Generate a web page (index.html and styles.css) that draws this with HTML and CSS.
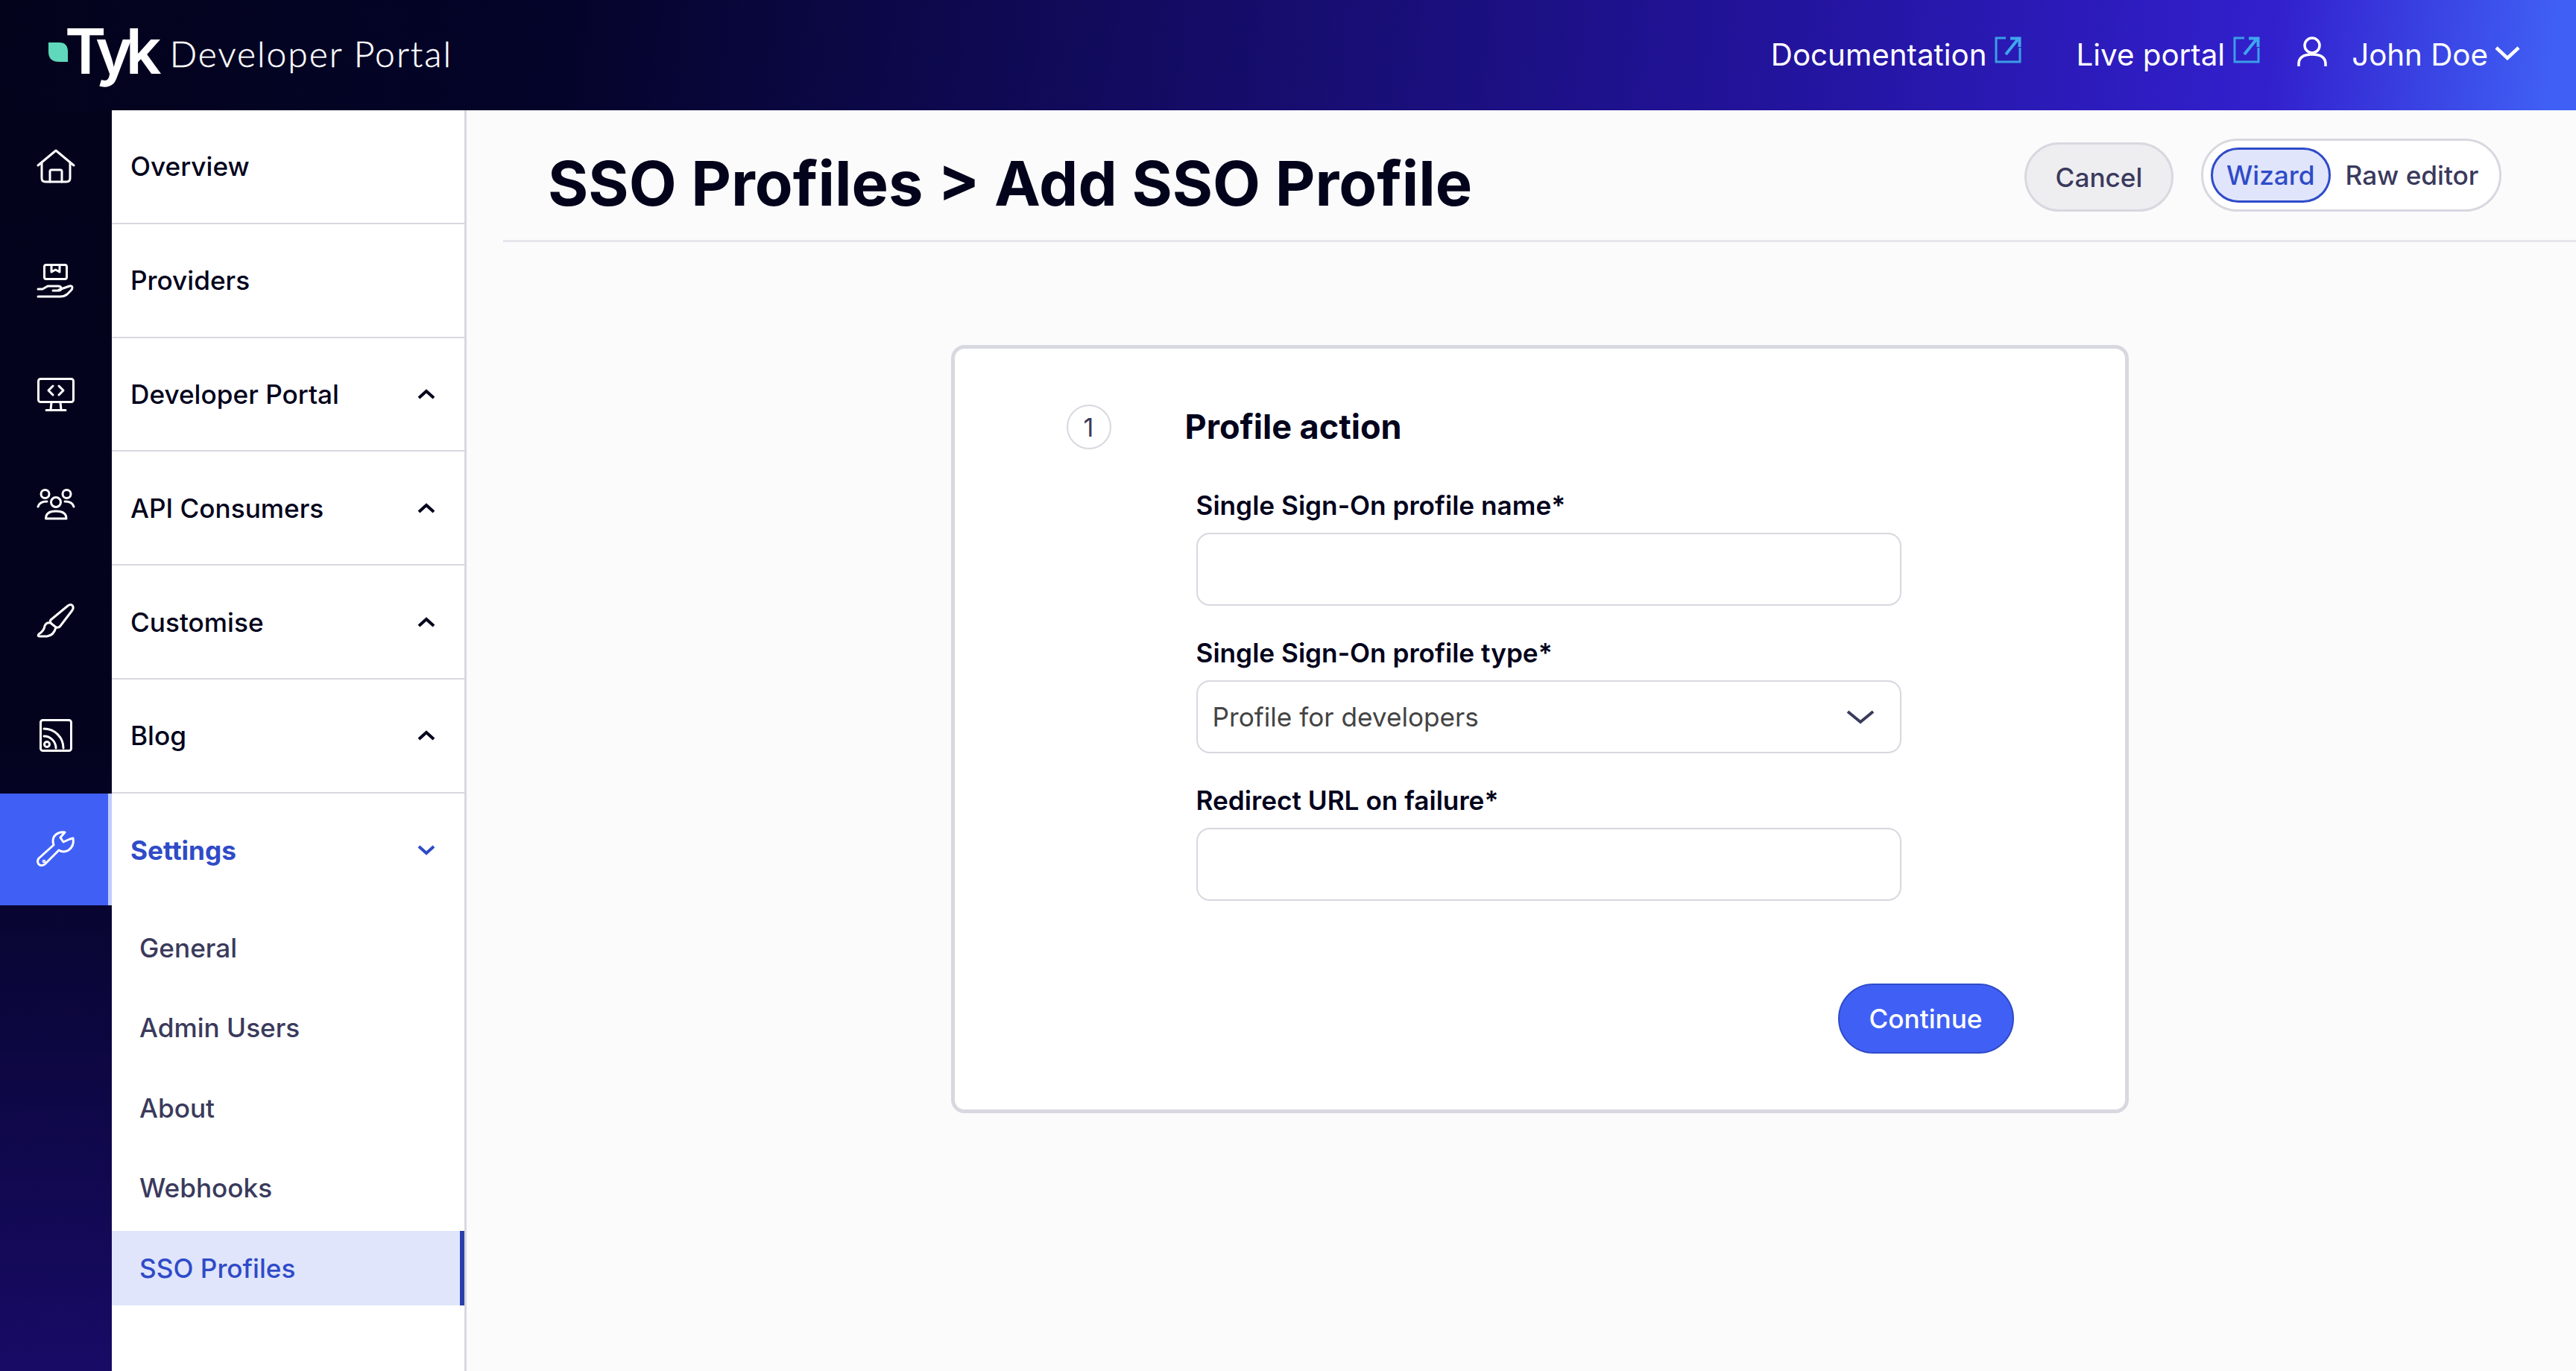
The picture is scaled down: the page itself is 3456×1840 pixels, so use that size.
FILE: index.html
```html
<!DOCTYPE html>
<html lang="en">
<head>
<meta charset="utf-8">
<title>SSO Profiles - Tyk Developer Portal</title>
<link rel="stylesheet" href="styles.css">
</head>
<body>
<header class="topbar">
  <a class="brand">
    <svg class="leaf" viewBox="0 0 28 28"><path d="M0 0H15Q27 0 27 13V27H15Q0 27 0 13Z"/></svg>
    <span class="brand-tyk">Tyk</span>
    <span class="brand-name">Developer Portal</span>
  </a>
  <nav class="topnav">
    <a class="toplink">Documentation
      <svg class="ext" viewBox="0 0 36 36"><path class="ext-box" d="M15 2H2V34H34V15"/><path class="ext-arrow" d="M15 24L31 4M21 2.500H33.500V14"/></svg>
    </a>
    <a class="toplink">Live portal
      <svg class="ext" viewBox="0 0 36 36"><path class="ext-box" d="M15 2H2V34H34V15"/><path class="ext-arrow" d="M15 24L31 4M21 2.500H33.500V14"/></svg>
    </a>
    <a class="toplink user">
      <svg class="user-icon" viewBox="0 0 40 40"><circle cx="20" cy="12" r="10"/><path d="M2 40V37Q2 24 20 24Q38 24 38 37V40"/></svg>
      <span class="user-name">John Doe</span>
      <svg class="user-chev" viewBox="0 0 36 20"><path d="M3 3L18 17L33 3"/></svg>
    </a>
  </nav>
</header>

<div class="shell">
  <aside class="rail">
    <a class="rail-item">
      <svg class="ri" viewBox="0 0 80 70"><path d="M16 34L40 14L64 34"/><path d="M21 31V51Q21 56 26 56H54Q59 56 59 51V31"/><path d="M32 56V42Q32 40 34 40H46Q48 40 48 42V56"/></svg>
    </a>
    <a class="rail-item">
      <svg class="ri" viewBox="0 0 80 70"><rect x="24.500" y="14.500" width="30" height="19" rx="2.500"/><path d="M34 15V24L39.500 21L45 24V15"/><path d="M16 47H22L29 43H43Q47 43 47 46Q47 49 43 49H36"/><path d="M44 48L58 43Q62 42 62 45Q62 47 60 49L55 54Q51 57 46 57H16"/></svg>
    </a>
    <a class="rail-item">
      <svg class="ri" viewBox="0 0 80 70"><rect x="16.500" y="14.500" width="47" height="31" rx="3"/><path d="M36 24L30 30L36 36"/><path d="M44 24L50 30L44 36"/><path d="M34 46L33 56M46 46L47 56M27 56.500H53"/></svg>
    </a>
    <a class="rail-item">
      <svg class="ri" viewBox="0 0 80 70"><circle cx="40" cy="28" r="6.500"/><path d="M26.500 50Q26.500 40 40 40Q54 40 54 50Z"/><circle cx="25.500" cy="17" r="5.500"/><circle cx="54.500" cy="17" r="5.500"/><path d="M16 34Q18 27 28 27M64 34Q62 27 52 27"/></svg>
    </a>
    <a class="rail-item">
      <svg class="ri" viewBox="0 0 80 70"><path d="M33 33L56 14Q60 11 62.500 14Q64 17 62 20L46 41Q43 45 39 42L34 38Q31 35 33 33Z"/><path d="M33 37Q27 36 25 41Q24 48 17 52Q15 55 18 55H28Q37 54 40 43"/></svg>
    </a>
    <a class="rail-item">
      <svg class="ri" viewBox="0 0 80 70"><rect x="19.500" y="14.500" width="41" height="41" rx="3"/><circle cx="28" cy="47" r="3.500"/><path d="M24 36A16 16 0 0 1 40 52M24 26A26 26 0 0 1 50 52"/></svg>
    </a>
    <a class="rail-item active">
      <svg class="ri" viewBox="0 0 80 70"><path d="M17 47L37 29Q34 20 40 15Q45 11 52 12L46 19L50 25L59 21L63 20Q65 30 57 36Q50 40 44 36L25 55Q20 58 17 55Q14 51 17 47Z"/><circle cx="24" cy="51" r="0.800"/></svg>
    </a>
  </aside>

  <nav class="sidebar">
    <a class="side-item">Overview</a>
    <a class="side-item">Providers</a>
    <a class="side-item">Developer Portal<svg class="chev" viewBox="0 0 24 14"><path d="M2 12L12 3L22 12"/></svg></a>
    <a class="side-item">API Consumers<svg class="chev" viewBox="0 0 24 14"><path d="M2 12L12 3L22 12"/></svg></a>
    <a class="side-item">Customise<svg class="chev" viewBox="0 0 24 14"><path d="M2 12L12 3L22 12"/></svg></a>
    <a class="side-item">Blog<svg class="chev" viewBox="0 0 24 14"><path d="M2 12L12 3L22 12"/></svg></a>
    <a class="side-item open">Settings<svg class="chev" viewBox="0 0 24 14"><path d="M2 2L12 11L22 2"/></svg></a>
    <div class="sub-list">
      <a class="sub-item">General</a>
      <a class="sub-item">Admin Users</a>
      <a class="sub-item">About</a>
      <a class="sub-item">Webhooks</a>
      <a class="sub-item current">SSO Profiles</a>
    </div>
  </nav>

  <main class="main">
    <div class="page-head">
      <h1 class="page-title">SSO Profiles &gt; Add SSO Profile</h1>
      <div class="page-actions">
        <button class="btn-cancel" type="button">Cancel</button>
        <div class="mode-toggle">
          <span class="mode on">Wizard</span>
          <span class="mode">Raw editor</span>
        </div>
      </div>
    </div>
    <section class="card">
      <div class="step-head">
        <span class="step-num">1</span>
        <h2 class="step-title">Profile action</h2>
      </div>
      <form class="form">
        <label class="field-label">Single Sign-On profile name*</label>
        <input class="field" type="text">
        <label class="field-label">Single Sign-On profile type*</label>
        <div class="field select">
          <span>Profile for developers</span>
          <svg class="select-chev" viewBox="0 0 40 22"><path d="M3 4L20 18L37 4"/></svg>
        </div>
        <label class="field-label">Redirect URL on failure*</label>
        <input class="field" type="text">
        <div class="form-actions">
          <button class="btn-primary" type="button">Continue</button>
        </div>
      </form>
    </section>
  </main>
</div>
</body>
</html>
```
FILE: styles.css
```css
* { box-sizing: border-box; }
html, body { margin: 0; padding: 0; height: 100%; }
body {
  width: 3456px;
  height: 1840px;
  overflow: hidden;
  display: flex;
  flex-direction: column;
  background: #fbfbfc;
  color: #03031c;
  font-family: Inter, "Liberation Sans", sans-serif;
  font-size: 35.200px;
}

/* top bar */
.topbar {
  height: 148px;
  flex: none;
  display: flex;
  align-items: center;
  justify-content: space-between;
  padding: 0 74px 0 65px;
  background: linear-gradient(97deg, #03031c 0%, #04042a 22%, #22139a 68%, #3220cd 88%, #4060f5 99%);
  color: #fff;
}
.brand { display: flex; align-items: center; }
.leaf { width: 27px; height: 27px; fill: #5fd8bb; align-self: flex-start; margin-top: 52px; flex: none; }
.brand-tyk {
  font-family: Inter, sans-serif;
  font-weight: 600;
  font-size: 84px;
  line-height: 148px;
  letter-spacing: -9px;
  margin-left: -5px;
  margin-top: -10px;
}
.brand-name {
  font-family: Lato, sans-serif;
  font-weight: 300;
  font-size: 48px;
  letter-spacing: 2px;
  -webkit-text-stroke: 0.400px #fff;
  margin-left: 20px;
  margin-top: -6px;
}
.topnav { display: flex; align-items: center; }
.toplink { display: flex; align-items: center; font-size: 40.300px; line-height: 48px; margin-left: 73px; }
.ext { width: 36px; height: 36px; margin: -14px 0 0 11px; fill: none; }
.ext-box { stroke: #3a9fe6; stroke-width: 3; }
.ext-arrow { stroke: #3fa6ee; stroke-width: 4; }
.user { margin-left: 50px; }
.user-icon { width: 40px; height: 40px; margin-top: -10px; fill: none; stroke: #fff; stroke-width: 3.500; }
.user-name { margin-left: 33px; }
.user-chev { width: 36px; height: 20px; margin: -6px 0 0 8px; fill: none; stroke: #fff; stroke-width: 4.500; }

/* layout */
.shell { flex: 1; display: flex; min-height: 0; }

/* icon rail */
.rail {
  width: 150px;
  flex: none;
  display: flex;
  flex-direction: column;
  gap: 2.800px;
  background: linear-gradient(180deg, #03031c 0%, #03031e 50%, #170b66 100%);
}
.rail-item { height: 150px; display: flex; align-items: center; justify-content: center; flex: none; }
.rail-item.active { background: #4060f5; border-right: 5px solid #bfcbfa; padding-left: 5px; }
.ri { width: 80px; height: 70px; fill: none; stroke: #fff; stroke-width: 3; stroke-linecap: round; stroke-linejoin: round; }

/* sidebar */
.sidebar { width: 476px; flex: none; background: #fff; border-right: 3px solid #d8d8e0; }
.side-item {
  height: 152.800px;
  padding: 0 39px 0 25px;
  display: flex;
  align-items: center;
  justify-content: space-between;
  border-bottom: 2.800px solid #d8d8e0;
  font-weight: 500;
  color: #03031c;
}
.side-item.open { font-weight: 700; color: #2f4bc8; border-bottom: 0; }
.chev { width: 24px; height: 14px; fill: none; stroke: #03031c; stroke-width: 4; }
.open .chev { stroke: #2f4bc8; }
.sub-list { display: flex; flex-direction: column; gap: 7.500px; padding-top: 4px; }
.sub-item { height: 100px; padding-left: 37px; display: flex; align-items: center; font-weight: 500; color: #3a3a5c; }
.sub-item.current { background: #e0e5fb; color: #2f4bc8; border-right: 6px solid #2a3fa8; }

/* main */
.main { flex: 1; min-width: 0; margin-left: 49px; display: flex; flex-direction: column; }
.page-head {
  height: 177px;
  flex: none;
  display: flex;
  align-items: center;
  justify-content: space-between;
  padding: 0 100px 0 60px;
  border-bottom: 3px solid #e6e6ec;
}
.page-title { margin: 22px 0 0; font-size: 83px; line-height: 100px; font-weight: 700; color: #03031c; }
.page-actions { display: flex; align-items: center; gap: 37px; }
.btn-cancel {
  width: 200px;
  height: 93px;
  margin-top: 5px;
  border: 3px solid #d8d8e0;
  border-radius: 47px;
  background: #eeeef1;
  color: #3a3a5c;
  font: 500 35.200px Inter, sans-serif;
}
.mode-toggle {
  width: 403px;
  height: 98px;
  padding: 0 10px;
  display: flex;
  align-items: center;
  border: 3px solid #d8d8e0;
  border-radius: 49px;
  background: #fff;
}
.mode { font-weight: 500; color: #3a3a5c; padding: 0 20px; white-space: nowrap; }
.mode.on {
  height: 74px;
  padding: 0 18px;
  display: flex;
  align-items: center;
  border: 3px solid #2f4bc8;
  border-radius: 37px;
  background: #e0e5fb;
  color: #2f4bc8;
}

/* card */
.card {
  width: 1580px;
  height: 1031px;
  margin: 138px auto 0;
  padding: 75px 0 0 150px;
  background: #fff;
  border: 5px solid #d8d8e0;
  border-radius: 18px;
}
.step-head { display: flex; align-items: center; }
.step-num {
  width: 60px;
  height: 60px;
  flex: none;
  display: flex;
  align-items: center;
  justify-content: center;
  border: 2.500px solid #d8d8e0;
  border-radius: 50%;
  color: #3a3a5c;
  font-size: 34px;
}
.step-title { margin: 0 0 0 99px; font-size: 45px; line-height: 60px; font-weight: 700; color: #03031c; }
.form { width: 1097px; margin: 53px 0 0 174px; display: flex; flex-direction: column; }
.field-label { font-weight: 600; line-height: 44px; color: #03031c; margin-bottom: 15px; }
.field {
  width: 946px;
  height: 98px;
  padding: 0 20px;
  margin-bottom: 41px;
  background: #fff;
  border: 2.500px solid #d8d8e0;
  border-radius: 18px;
  font: 400 35.200px Inter, sans-serif;
  color: #444;
}
.select { display: flex; align-items: center; justify-content: space-between; }
.select-chev { width: 40px; height: 22px; margin-right: 13px; fill: none; stroke: #3a3a5c; stroke-width: 4; }
.form-actions { display: flex; justify-content: flex-end; margin-top: 70px; }
.btn-primary {
  width: 236px;
  height: 94px;
  border: 2.500px solid #2f4bc8;
  border-radius: 47px;
  background: #4060f5;
  color: #fff;
  font: 500 35.200px Inter, sans-serif;
}
```
